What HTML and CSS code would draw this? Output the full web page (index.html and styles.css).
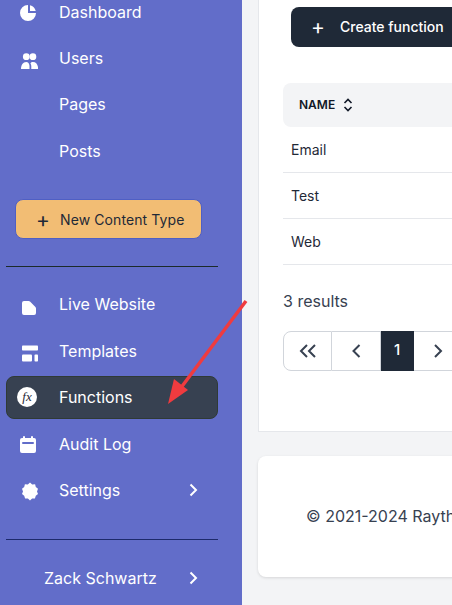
FILE: index.html
```html
<!DOCTYPE html>
<html lang="en">
  <head>
    <meta charset="UTF-8" />
    <meta name="viewport" content="width=device-width, initial-scale=1.0" />
    <title>Functions</title>
    <link rel="stylesheet" href="styles.css">
  </head>
  <body>
    <div class="layout">
      <aside class="sidebar">
        <ul class="nav nav-top">
          <li class="nav-item">
            <svg class="nav-icon" viewBox="0 0 20 20"><path d="M2 10a8 8 0 018-8v8h8a8 8 0 11-16 0z"/><path d="M12 2.252A8.014 8.014 0 0117.748 8H12V2.252z"/></svg>
            <span>Dashboard</span>
          </li>
          <li class="nav-item">
            <svg class="nav-icon" viewBox="-1.5 -2.5 20 20"><circle cx="6.8" cy="5.2" r="3.4"/><circle cx="13.4" cy="5.2" r="3.4"/><path d="M1.5 17.5c0-4 2-7 5.2-7 2 0 3 1.300 3.300 3.800v3.200z"/><path d="M18.700 17.500c0-4-2-7-5.200-7-1.200 0-2 .4-2.600 1.200.5.800.8 1.700.9 2.700v3.100z"/></svg>
            <span>Users</span>
          </li>
          <li class="nav-item nav-item-plain"><span>Pages</span></li>
          <li class="nav-item nav-item-plain"><span>Posts</span></li>
        </ul>
        <button class="new-type"><span class="plus">+</span>New Content Type</button>
        <hr class="rule">
        <ul class="nav">
          <li class="nav-item">
            <svg class="nav-icon" viewBox="0 -3 20 20"><path d="M4 4a2 2 0 012-2h4.586A2 2 0 0112 2.586L17.400 8A2 2 0 0118 9.414V14a2 2 0 01-2 2H6a2 2 0 01-2-2V4z"/></svg>
            <span>Live Website</span>
          </li>
          <li class="nav-item">
            <svg class="nav-icon" viewBox="0 0 20 20"><rect x="4" y="3.600" width="16" height="5" rx=".8"/><rect x="4" y="12.600" width="10" height="7" rx="1"/><rect x="16.500" y="12.600" width="3.500" height="7" rx=".8"/></svg>
            <span>Templates</span>
          </li>
          <li class="nav-item active">
            <span class="fx">fx</span>
            <span>Functions</span>
          </li>
          <li class="nav-item">
            <svg class="nav-icon" viewBox="0 0 20 20"><path fill-rule="evenodd" d="M6 1a1 1 0 011 1v1h6V2a1 1 0 112 0v1h1a2 2 0 012 2v11a2 2 0 01-2 2H4a2 2 0 01-2-2V5a2 2 0 012-2h1V2a1 1 0 011-1zM5 7a1 1 0 000 2h10a1 1 0 100-2H5z"/></svg>
            <span>Audit Log</span>
          </li>
          <li class="nav-item">
            <svg class="nav-icon" viewBox="0 0 20 20"><path d="M12 .5l2.200 2 2.900-.2.700 2.800 2.200 1.700-1 2.700 1 2.600-2.200 1.700-.9 2.800-2.800-.1-2.100 1.900-2.100-1.900-2.800.1-.9-2.800-2.200-1.700 1-2.600-1-2.700 2.200-1.700.7-2.800 2.900.2z"/></svg>
            <span>Settings</span>
            <svg class="chevron" viewBox="0 0 10 14"><path d="M2.500 1.500L8 7l-5.500 5.500"/></svg>
          </li>
        </ul>
        <hr class="rule rule-user">
        <div class="user">
          <span>Zack Schwartz</span>
          <svg class="chevron" viewBox="0 0 10 14"><path d="M2.500 1.500L8 7l-5.500 5.500"/></svg>
        </div>
      </aside>

      <main class="content">
        <section class="card">
          <button class="create"><span class="plus">+</span>Create function</button>
          <table class="table">
            <thead>
              <tr>
                <th>
                  NAME
                  <svg class="sort" viewBox="0 0 10 16"><path d="M1.500 6L5 2.500 8.500 6M1.500 10L5 13.500 8.500 10"/></svg>
                </th>
              </tr>
            </thead>
            <tbody>
              <tr><td>Email</td></tr>
              <tr><td>Test</td></tr>
              <tr><td>Web</td></tr>
            </tbody>
          </table>
          <p class="results">3 results</p>
          <ul class="pager">
            <li class="page first"><svg viewBox="0 0 20 16"><path d="M9 2L3 8l6 6M17 2l-6 6 6 6"/></svg></li>
            <li class="page"><svg viewBox="0 0 20 16"><path d="M13.500 2L7.500 8l6 6"/></svg></li>
            <li class="page current">1</li>
            <li class="page"><svg viewBox="0 0 20 16"><path d="M7 2l6 6-6 6"/></svg></li>
          </ul>
        </section>
        <footer class="footer">© 2021-2024 Raytha</footer>
      </main>
    </div>

    <svg class="arrow" viewBox="0 0 452 605">
      <path class="arrow-line" d="M246 301L180 389"/>
      <path class="arrow-head" d="M168 404L174 379 188 390z"/>
    </svg>
  </body>
</html>
```

FILE: styles.css
```css
html,
body {
  margin: 0;
  padding: 0;
  height: 605px;
  overflow: hidden;
}
body {
  font-family: "Inter", "Liberation Sans", sans-serif;
  background: #f3f4f6;
  color: #1f2937;
  position: relative;
}
.layout {
  display: flex;
  width: 452px;
  height: 615px;
  margin-top: -10px;
}

/* sidebar */
.sidebar {
  flex: 0 0 242px;
  box-sizing: border-box;
  background: #626dc9;
  padding: 0 24px 0 6px;
  color: #fff;
}
.nav {
  list-style: none;
  margin: 0;
  padding: 0;
  display: flex;
  flex-direction: column;
  gap: 3.400px;
}
.nav-item {
  display: flex;
  align-items: center;
  gap: 21px;
  height: 43px;
  box-sizing: border-box;
  padding: 0 12px;
  font-size: 16px;
  border: 1px solid transparent;
  border-radius: 8px;
}
.nav-item-plain {
  padding-left: 52px;
}
.nav-item.active {
  background: #374151;
  border-color: #2f3a36;
}
.nav-icon {
  flex: none;
  width: 20px;
  height: 20px;
  fill: #fff;
  margin-left: -1px;
  margin-top: 3px;
}
.fx {
  flex: none;
  width: 20px;
  height: 20px;
  margin-left: -2px;
  margin-right: 1px;
  border-radius: 50%;
  background: #fff;
  color: #1f2937;
  font-family: "Liberation Serif", serif;
  font-style: italic;
  font-size: 13px;
  line-height: 20px;
  text-align: center;
}
.chevron {
  width: 10px;
  height: 14px;
  fill: none;
  stroke: #fff;
  stroke-width: 2;
  margin-left: auto;
  margin-right: 7px;
}
.new-type {
  display: flex;
  align-items: center;
  width: 187px;
  height: 40px;
  margin: 27px 0 0 9px;
  padding: 0 0 0 20px;
  background: #f2bd74;
  border: 1px solid #4f5fc4;
  border-radius: 8px;
  color: #1f2937;
  font-family: inherit;
  font-size: 14px;
  letter-spacing: 0.1px;
}
.plus {
  width: 14px;
  margin-right: 10px;
  font-size: 21px;
  font-weight: 400;
  line-height: 1;
  letter-spacing: 0;
  text-align: center;
}
.rule {
  height: 1px;
  margin: 26.800px 0 16px;
  border: 0;
  background: #1c2b2a;
}
.rule-user {
  margin: 27.400px 0 0;
  background: #1d2a6b;
}
.user {
  display: flex;
  align-items: center;
  height: 77px;
  padding-left: 38px;
  font-size: 16px;
}
.user .chevron {
  margin-right: 20px;
}

/* main column */
.content {
  flex: 1;
  min-width: 0;
  overflow: hidden;
  padding-left: 16px;
}
.card {
  box-sizing: border-box;
  width: 600px;
  height: 442px;
  padding: 17px 24px 0;
  background: #fff;
  border: 1px solid #e5e7eb;
  border-top: 0;
}
.create {
  display: flex;
  align-items: center;
  height: 40px;
  width: 240px;
  margin-left: 8px;
  padding: 0 0 1px 20px;
  background: #1f2937;
  border: 0;
  border-radius: 8px;
  color: #fff;
  font-family: inherit;
  font-size: 14px;
  font-weight: 500;
}
.create .plus {
  margin-right: 15px;
}
.table {
  width: 500px;
  margin-top: 36px;
  border-collapse: collapse;
  font-size: 14px;
}
.table th {
  height: 44px;
  padding: 0 16px;
  background: #f3f4f6;
  border-radius: 8px 0 0 8px;
  font-size: 12px;
  font-weight: 600;
  color: #111827;
  text-align: left;
}
.sort {
  width: 10px;
  height: 16px;
  margin-left: 5px;
  vertical-align: middle;
  fill: none;
  stroke: #111827;
  stroke-width: 1.600;
}
.table td {
  height: 46px;
  box-sizing: border-box;
  padding: 0 8px;
  border-bottom: 1px solid #e5e7eb;
}
.table tbody tr:first-child td {
  height: 45px;
}
.results {
  margin: 26px 0 0;
  font-size: 16px;
  line-height: 20px;
  color: #374151;
}
.pager {
  list-style: none;
  display: flex;
  margin: 20px 0 0;
  padding: 0;
  height: 40px;
}
.page {
  display: flex;
  align-items: center;
  justify-content: center;
  box-sizing: border-box;
  width: 49px;
  border: 1px solid #d1d5db;
  border-left: 0;
  background: #fff;
}
.page svg {
  width: 20px;
  height: 16px;
  fill: none;
  stroke: #374151;
  stroke-width: 2;
}
.first {
  border-left: 1px solid #d1d5db;
  border-radius: 8px 0 0 8px;
}
.current {
  width: 33px;
  padding-bottom: 2px;
  background: #1f2937;
  border-color: #1f2937;
  color: #fff;
  font-size: 15px;
  font-weight: 500;
}
.footer {
  box-sizing: border-box;
  width: 600px;
  height: 121px;
  margin-top: 24px;
  padding: 50px 48px 0;
  background: #fff;
  border-radius: 8px;
  box-shadow: 0 1px 3px rgba(0, 0, 0, 0.12);
  font-size: 16px;
  line-height: 20px;
  color: #374151;
  white-space: nowrap;
}

/* annotation drawn over the screenshot */
.arrow {
  position: absolute;
  left: 0;
  top: 0;
  width: 452px;
  height: 605px;
  pointer-events: none;
}
.arrow-line {
  fill: none;
  stroke: #ef3b3f;
  stroke-width: 3.500;
}
.arrow-head {
  fill: #ef3b3f;
}
```
